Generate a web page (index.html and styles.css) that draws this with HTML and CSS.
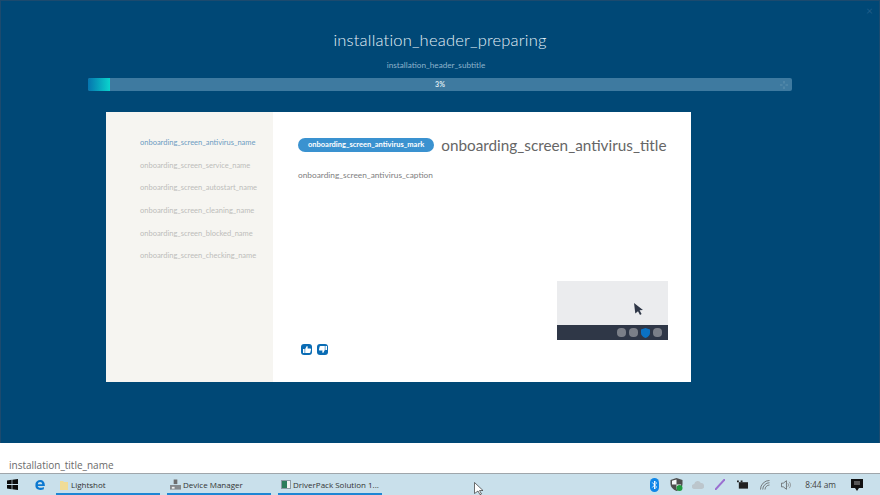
FILE: index.html
```html
<!DOCTYPE html>
<html lang="en">
<head>
    <title>installation_title_name</title>
    <link rel="stylesheet" href="styles.css">
</head>
<body>
    <div class="installer">
        <span class="close-x">&times;</span>
        <h1>installation_header_preparing</h1>
        <p class="subtitle">installation_header_subtitle</p>
        <div class="progress">
            <div class="progress-fill"></div>
            <span class="progress-label">3%</span>
            <svg class="progress-spin" width="8" height="8" viewBox="0 0 8 8"><path d="M4 0v2.500M4 5.500V8M0 4h2.500M5.500 4H8" stroke="#5d8fae" stroke-width="1.200"/></svg>
        </div>
        <div class="card">
            <ul class="steps">
                <li class="active">onboarding_screen_antivirus_name</li>
                <li>onboarding_screen_service_name</li>
                <li>onboarding_screen_autostart_name</li>
                <li>onboarding_screen_cleaning_name</li>
                <li>onboarding_screen_blocked_name</li>
                <li>onboarding_screen_checking_name</li>
            </ul>
            <div class="content">
                <div class="content-head">
                    <span class="mark">onboarding_screen_antivirus_mark</span>
                    <h2>onboarding_screen_antivirus_title</h2>
                </div>
                <p class="caption">onboarding_screen_antivirus_caption</p>
                <div class="content-foot">
                    <div class="votes">
                        <span class="vote">
                            <svg width="8" height="7" viewBox="0 0 8 7"><path d="M0 3h1.600v4H0zM2.200 3 3.800 0c.7 0 1 .5.900 1.200L4.500 2.500h2.800c.5 0 .8.400.7.900L7.400 6.300c-.1.400-.4.700-.9.700H2.200z" fill="#fff"/></svg>
                        </span>
                        <span class="vote">
                            <svg width="8" height="7" viewBox="0 0 8 7"><path d="M6.400 0H8v4H6.400zM5.800 4 4.200 7c-.7 0-1-.5-.9-1.200L3.500 4.500H.7c-.5 0-.8-.4-.7-.9L.6.700C.7.300 1 0 1.500 0h4.300z" fill="#fff"/></svg>
                        </span>
                    </div>
                    <div class="preview">
                        <div class="preview-desk">
                            <svg class="preview-cursor" width="10" height="12" viewBox="0 0 10 12"><path d="M0 0 9 7 5.600 7.300 7.600 11 6 12 4 8.200 1.300 10.500z" fill="#2f3747"/></svg>
                        </div>
                        <div class="preview-tray">
                            <span class="tray-dot"></span>
                            <span class="tray-dot"></span>
                            <svg width="9" height="10" viewBox="0 0 9 10"><path d="M4.500 0 9 1.500V5c0 2.500-2 4-4.500 5C2 9 0 7.500 0 5V1.500z" fill="#0a72c4"/></svg>
                            <span class="tray-dot"></span>
                        </div>
                    </div>
                </div>
            </div>
        </div>
    </div>

    <div class="title-bar">installation_title_name</div>

    <div class="taskbar">
        <svg class="win-logo" width="11" height="11" viewBox="0 0 13 13"><path d="M0 1.800 5.500 1v5H0zM6.300.9 13 0v6H6.300zM0 7h5.500v5L0 11.200zM6.300 7H13v6l-6.700-.9z" fill="#0b0b0b"/></svg>
        <svg class="edge-logo" width="10" height="10" viewBox="0 0 13 13"><path d="M.3 6C1 2 3.500 0 6.800 0c3.700 0 6 2.600 6 6.800v1H3.600c.2 2.500 3.800 3.200 7.900 1.200v2.900c-5 2.100-11 .8-11-4.700 0-1.400.5-2.500 1.500-3.500C1.600 4.500 1 5.200.3 6zM3.700 5.400h5.700C9.300 3.600 8.200 2.700 6.600 2.700S3.900 3.700 3.700 5.400z" fill="#0b78d0"/></svg>
        <div class="task task-lightshot">
            <svg width="8" height="10" viewBox="0 0 8 10"><path d="M0 1h3l1 1h4v8H0z" fill="#f0dc96"/></svg>
            <span>Lightshot</span>
        </div>
        <div class="task task-device">
            <svg width="11" height="12" viewBox="0 0 12 12"><path d="M4 0h4v5H4z" fill="#6d6d6d"/><path d="M0 6h12v5H0z" fill="#85898c"/><path d="M2 8h3v2H2z" fill="#eee"/></svg>
            <span>Device Manager</span>
        </div>
        <div class="task task-driver">
            <svg width="10" height="9" viewBox="0 0 10 9"><path d="M0 0h10v9H0z" fill="#8d9aa5"/><path d="M1 1h5v7H1z" fill="#2e7d5c"/><path d="M6 1h3v7H6z" fill="#f2f2f2"/></svg>
            <span>DriverPack Solution 1...</span>
        </div>
        <div class="tray">
            <svg class="icon-bluetooth" width="9" height="14" viewBox="0 0 9 14"><rect width="9" height="14" rx="4.500" fill="#0f86e8"/><path d="M2.300 4.500 6.500 9 4.500 11V3l2 2-4.200 4.500" fill="none" stroke="#fff" stroke-width=".9"/></svg>
            <svg class="icon-shield" width="13" height="13" viewBox="0 0 12 13"><path d="M6 0 12 2v4c0 3-2.500 5.500-6 7-3.500-1.500-6-4-6-7V2z" fill="#4d4d4d"/><path d="M6 1.500v5H1.500V2.800zM6 6.500h4.700C10.300 8.500 8.500 10.300 6 11.500z" fill="#f4f7f9"/><circle cx="9" cy="10" r="3" fill="#1f9b3f"/></svg>
            <svg class="icon-cloud" width="12" height="8" viewBox="0 0 12 8"><path d="M2.500 8a2.500 2.500 0 0 1-.3-5A3.500 3.500 0 0 1 8.800 2 3 3 0 0 1 9.500 8z" fill="#bcc6cc"/></svg>
            <svg class="icon-pen" width="10" height="11" viewBox="0 0 10 11"><path d="M0 11 10 0" stroke="#9a6fd0" stroke-width="2"/></svg>
            <svg class="icon-battery" width="11" height="9" viewBox="0 0 12 9"><path d="M2 2h10v7H2z" fill="#222"/><path d="M0 0h2v2H0zM4 0h2v2H4z" fill="#222"/></svg>
            <svg class="icon-wifi" width="10" height="10" viewBox="0 0 11 11"><path d="M.5 10.500A10 10 0 0 1 10.500.5M3 10.500A7.500 7.500 0 0 1 10.500 3M5.500 10.500A5 5 0 0 1 10.500 5.500" fill="none" stroke="#555" stroke-width=".8"/></svg>
            <svg class="icon-speaker" width="10" height="10" viewBox="0 0 11 11"><path d="M.5 3.500h2L6 .8v9.400L2.500 7.500h-2z" fill="none" stroke="#555" stroke-width=".8"/><path d="M7.500 3.500a3 3 0 0 1 0 4M9 2a5 5 0 0 1 0 7" fill="none" stroke="#777" stroke-width=".7"/></svg>
            <span class="clock">8:44 am</span>
            <svg class="notify" width="12" height="12" viewBox="0 0 12 12"><path d="M0 0h12v9H8l-2 3-2-3H0z" fill="#111"/><path d="M3 3h6M3 5h6" stroke="#ddd" stroke-width=".7"/></svg>
        </div>
        <svg class="mouse" width="10" height="13" viewBox="0 0 10 13"><path d="M.5.500 9 8.500H5.500L7.500 12 6 12.700 4 9 .5 11.500z" fill="#fff" stroke="#333" stroke-width=".7"/></svg>
    </div>
</body>
</html>
```

FILE: styles.css
```css
* {
    box-sizing: border-box;
}

html,
body {
    margin: 0;
    padding: 0;
    height: 495px;
    overflow: hidden;
}

body {
    font-family: Lato, "Open Sans", sans-serif;
    display: flex;
    flex-direction: column;
    background-color: #fff;
}

.installer {
    position: relative;
    height: 443px;
    flex: none;
    display: flex;
    flex-direction: column;
    align-items: center;
    padding-top: 29px;
    background-color: #004876;
    border: 1px solid #1c4a6e;
    border-bottom: none;
}

.close-x {
    position: absolute;
    top: 3px;
    right: 6px;
    font-size: 12px;
    line-height: 14px;
    color: #1f5c88;
}

h1 {
    margin: 0;
    height: 20px;
    font-size: 16.5px;
    font-weight: 300;
    line-height: 20px;
    color: #e6f0f6;
    letter-spacing: 0.2px;
}

.subtitle {
    margin: 10px 8px 0 0;
    height: 11px;
    font-size: 8.2px;
    line-height: 11px;
    color: #8db3cc;
}

.progress {
    position: relative;
    width: 704px;
    height: 13px;
    margin-top: 7px;
    margin-left: 87px;
    background-color: #3e7aa0;
    border-radius: 2px;
    text-align: center;
    align-self: flex-start;
}

.progress-fill {
    position: absolute;
    left: 0;
    top: 0;
    width: 22px;
    height: 13px;
    background: linear-gradient(to right, #0574ae, #0ad4cd);
    border-radius: 2px 0 0 2px;
}

.progress-label {
    position: relative;
    font-size: 7px;
    font-weight: 700;
    line-height: 13px;
    display: block;
    color: #dfeaf2;
}

.progress-spin {
    position: absolute;
    right: 4px;
    top: 3px;
}

.card {
    display: flex;
    width: 585px;
    height: 270px;
    margin-top: 21px;
    margin-left: 105px;
    align-self: flex-start;
    background-color: #fff;
}

.steps {
    width: 167px;
    flex: none;
    margin: 0;
    padding: 25px 0 0 34px;
    list-style: none;
    background-color: #f6f5f1;
    font-size: 7.5px;
    color: #bdbdbb;
}

.steps li {
    height: 22.7px;
    line-height: 11px;
}

.steps .active {
    color: #6d9cc2;
}

.content {
    flex: 1;
    display: flex;
    flex-direction: column;
    padding: 24px 25px 27px;
}

.content-head {
    display: flex;
    align-items: center;
    gap: 7px;
}

.mark {
    padding: 0 10px;
    height: 14px;
    line-height: 14px;
    border-radius: 7px;
    background-color: #3a92d0;
    color: #fff;
    font-size: 7.5px;
    font-weight: 700;
    white-space: nowrap;
}

h2 {
    margin: 0;
    font-size: 15.3px;
    font-weight: 400;
    color: #666;
    white-space: nowrap;
}

.caption {
    margin: 16px 0 0;
    font-size: 8.3px;
    line-height: 11px;
    color: #808080;
}

.content-foot {
    flex: 1;
    display: flex;
    align-items: flex-end;
    justify-content: space-between;
}

.votes {
    display: flex;
    gap: 5px;
    padding-left: 3px;
}

.vote {
    width: 11px;
    height: 11px;
    display: flex;
    align-items: center;
    justify-content: center;
    border-radius: 3px;
    background-color: #0a6cb4;
}

.preview {
    width: 111px;
    margin-bottom: 15px;
    margin-right: -1px;
}

.preview-desk {
    position: relative;
    height: 44px;
    background-color: #ebecee;
}

.preview-cursor {
    position: absolute;
    left: 77px;
    top: 22px;
}

.preview-tray {
    height: 15px;
    display: flex;
    align-items: center;
    justify-content: flex-end;
    gap: 3px;
    padding-right: 6px;
    background-color: #2f3747;
}

.tray-dot {
    width: 9px;
    height: 9px;
    border-radius: 4px;
    background-color: #7b7f88;
}

.title-bar {
    height: 31px;
    flex: none;
    padding: 16px 0 0 9px;
    border-bottom: 1px solid #9fa6ab;
    background-color: #fff;
    font-family: "Open Sans", sans-serif;
    font-size: 10px;
    line-height: 13px;
    color: #6a6a6a;
}

.taskbar {
    position: relative;
    flex: 1;
    display: flex;
    align-items: center;
    background-color: #c9e0eb;
    font-family: "Open Sans", sans-serif;
    font-size: 8px;
    color: #333;
}

.win-logo {
    margin-left: 7px;
}

.edge-logo {
    margin-left: 17px;
}

.task {
    width: 104px;
    height: 21px;
    display: flex;
    align-items: center;
    gap: 2px;
    padding: 2px 0 0 3px;
    border-bottom: 2px solid #1e86d4;
    white-space: nowrap;
}

.task-lightshot {
    margin-left: 11px;
    padding-left: 4px;
    gap: 3px;
}

.task-device,
.task-driver {
    margin-left: 7px;
}

.tray {
    margin-left: auto;
    display: flex;
    align-items: center;
    padding-right: 17px;
}

.icon-shield {
    margin-left: 11px;
}

.icon-cloud {
    margin-left: 9px;
}

.icon-pen {
    margin-left: 11px;
}

.icon-battery {
    margin-left: 12px;
}

.icon-wifi {
    margin-left: 12px;
}

.icon-speaker {
    margin-left: 11px;
}

.clock {
    margin: 0 15px 0 14px;
    font-size: 8.3px;
    color: #444;
}

.mouse {
    position: absolute;
    left: 474px;
    top: 8px;
}
```
